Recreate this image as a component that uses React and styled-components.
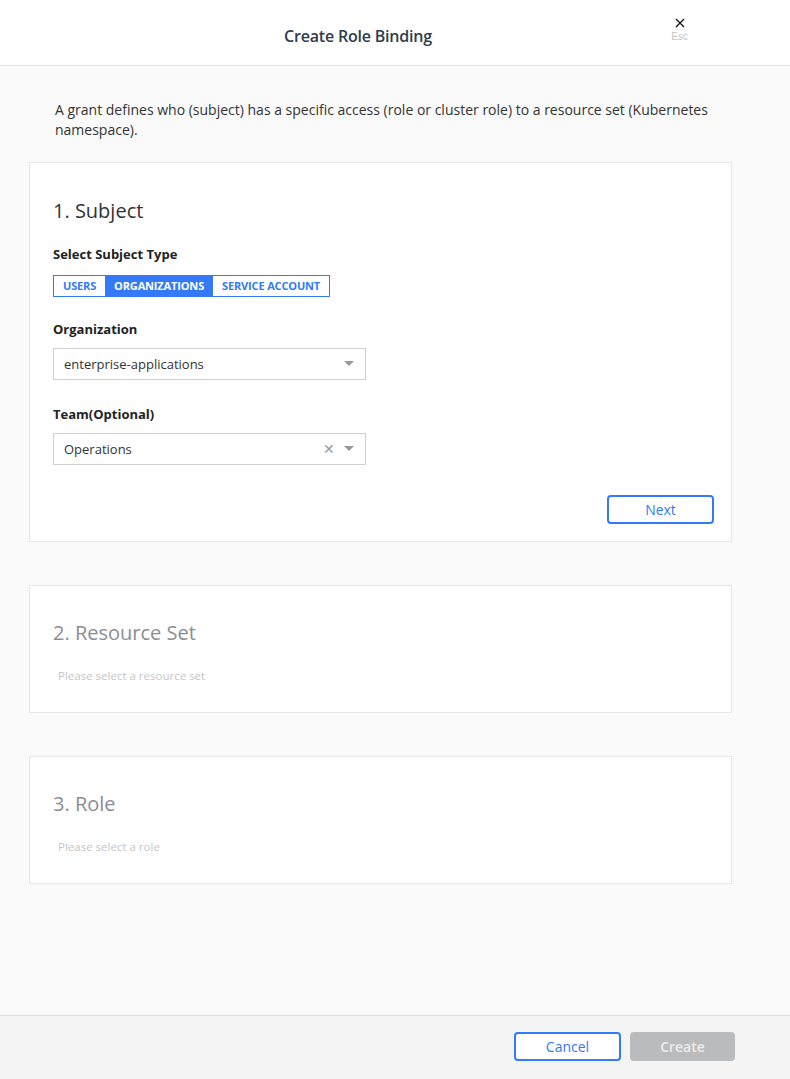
import React, { useState } from "react";
import styled, { createGlobalStyle } from "styled-components";

const GlobalStyle = createGlobalStyle`
  html, body {
    margin: 0;
    padding: 0;
    height: 100%;
    font-family: "Open Sans", "Noto Sans", sans-serif;
    background: #fafafa;
  }
  #root {
    height: 100%;
  }
  * {
    box-sizing: border-box;
  }
`;

const BLUE = "#3479f7";

const Page = styled.div`
  height: 100vh;
  display: flex;
  flex-direction: column;
  background: #fafafa;
`;

const Header = styled.header`
  position: relative;
  height: 66px;
  flex: none;
  display: flex;
  align-items: center;
  justify-content: center;
  padding: 6px 74px 0 0;
  background: #fff;
  border-bottom: 1px solid #e2e2e2;
`;

const Title = styled.h1`
  margin: 0;
  font-size: 16px;
  font-weight: 600;
  color: #2e3c4e;
  letter-spacing: -0.2px;
`;

const CloseButton = styled.button`
  position: absolute;
  right: 102px;
  top: 18px;
  display: flex;
  flex-direction: column;
  align-items: center;
  gap: 3px;
  border: none;
  background: none;
  padding: 0;
  cursor: pointer;
  font-family: "Liberation Sans", Arial, sans-serif;

  span {
    font-size: 10px;
    color: #c4c4c4;
  }
`;

const Body = styled.main`
  flex: 1;
  padding: 34px 58px 0 29px;
  display: flex;
  flex-direction: column;
`;

const Intro = styled.p`
  margin: 0 0 22px 26px;
  font-size: 14px;
  line-height: 20px;
  color: #333;
  max-width: 680px;
`;

const Card = styled.section`
  background: #fff;
  border: 1px solid #e6e6e6;
  padding: ${(p) => (p.$active ? "34px 17px 17px 23px" : "33px 23px 0")};
  margin-bottom: 43px;
  height: ${(p) => (p.$active ? "auto" : "128px")};
`;

const CardTitle = styled.h2`
  margin: 0 0 ${(p) => (p.$muted ? "21px" : "20px")};
  font-size: 20px;
  font-weight: 400;
  line-height: 28px;
  color: ${(p) => (p.$muted ? "#8a8e93" : "#333")};
`;

const Placeholder = styled.div`
  font-size: 11.5px;
  color: #c6c6c6;
  padding-left: 5px;
`;

const Label = styled.div`
  font-size: 13px;
  font-weight: 700;
  color: #222;
  margin-bottom: 10px;
`;

const Field = styled.div`
  margin-bottom: ${(p) => p.$gap || "24px"};
`;

const Segments = styled.div`
  display: inline-flex;
  border: 1px solid ${BLUE};
`;

const Segment = styled.button`
  border: none;
  padding: 0 9px;
  height: 20px;
  font-family: inherit;
  font-size: 11px;
  font-weight: 700;
  letter-spacing: -0.15px;
  color: ${(p) => (p.$active ? "#fff" : BLUE)};
  background: ${(p) => (p.$active ? BLUE : "#fff")};
  cursor: pointer;
`;

const Select = styled.div`
  width: 313px;
  height: 32px;
  border: 1px solid #d0d0d0;
  display: flex;
  align-items: center;
  padding: 0 10px 0 10px;
  font-size: 13px;
  color: #333;
  background: #fff;
`;

const SelectValue = styled.span`
  flex: 1;
`;

const ClearIcon = styled.span`
  color: #9a9a9a;
  font-size: 14px;
  margin-right: 9px;
  line-height: 1;
`;

const Caret = styled.span`
  width: 0;
  height: 0;
  border-left: 5px solid transparent;
  border-right: 5px solid transparent;
  border-top: 5px solid #999;
  margin-right: 1px;
`;

const Actions = styled.div`
  display: flex;
  justify-content: flex-end;
  gap: 9px;
`;

const Button = styled.button`
  width: ${(p) => p.$width || "107px"};
  height: 29px;
  border-radius: 4px;
  font-family: inherit;
  font-size: 14px;
  cursor: pointer;
  border: 2px solid ${(p) => (p.$disabled ? "#b9bbbd" : BLUE)};
  background: ${(p) => (p.$disabled ? "#b9bbbd" : "#fff")};
  color: ${(p) => (p.$disabled ? "#eceded" : BLUE)};
  font-weight: ${(p) => (p.$disabled ? 600 : 400)};
`;

const Footer = styled.footer`
  height: 64px;
  flex: none;
  display: flex;
  align-items: center;
  justify-content: flex-end;
  gap: 9px;
  padding: 0 55px 3px 0;
  background: #f4f4f4;
  border-top: 1px solid #e0e0e0;
`;

export default function App() {
  const [type, setType] = useState("ORGANIZATIONS");
  const types = ["USERS", "ORGANIZATIONS", "SERVICE ACCOUNT"];

  return (
    <Page>
      <GlobalStyle />
      <Header>
        <Title>Create Role Binding</Title>
        <CloseButton>
          <svg width="10" height="10" viewBox="0 0 10 10">
            <path d="M1 1 L9 9 M9 1 L1 9" stroke="#111" strokeWidth="1.3" />
          </svg>
          <span>Esc</span>
        </CloseButton>
      </Header>

      <Body>
        <Intro>
          A grant defines who (subject) has a specific access (role or cluster
          role) to a resource set (Kubernetes namespace).
        </Intro>

        <Card $active>
          <CardTitle>1. Subject</CardTitle>
          <Field $gap="23px">
            <Label>Select Subject Type</Label>
            <Segments>
              {types.map((t) => (
                <Segment key={t} $active={t === type} onClick={() => setType(t)}>
                  {t}
                </Segment>
              ))}
            </Segments>
          </Field>
          <Field $gap="25px">
            <Label>Organization</Label>
            <Select>
              <SelectValue>enterprise-applications</SelectValue>
              <Caret />
            </Select>
          </Field>
          <Field $gap="30px">
            <Label>Team(Optional)</Label>
            <Select>
              <SelectValue>Operations</SelectValue>
              <ClearIcon>✕</ClearIcon>
              <Caret />
            </Select>
          </Field>
          <Actions>
            <Button>Next</Button>
          </Actions>
        </Card>

        <Card>
          <CardTitle $muted>2. Resource Set</CardTitle>
          <Placeholder>Please select a resource set</Placeholder>
        </Card>

        <Card>
          <CardTitle $muted>3. Role</CardTitle>
          <Placeholder>Please select a role</Placeholder>
        </Card>
      </Body>

      <Footer>
        <Button>Cancel</Button>
        <Button $disabled $width="105px">Create</Button>
      </Footer>
    </Page>
  );
}
